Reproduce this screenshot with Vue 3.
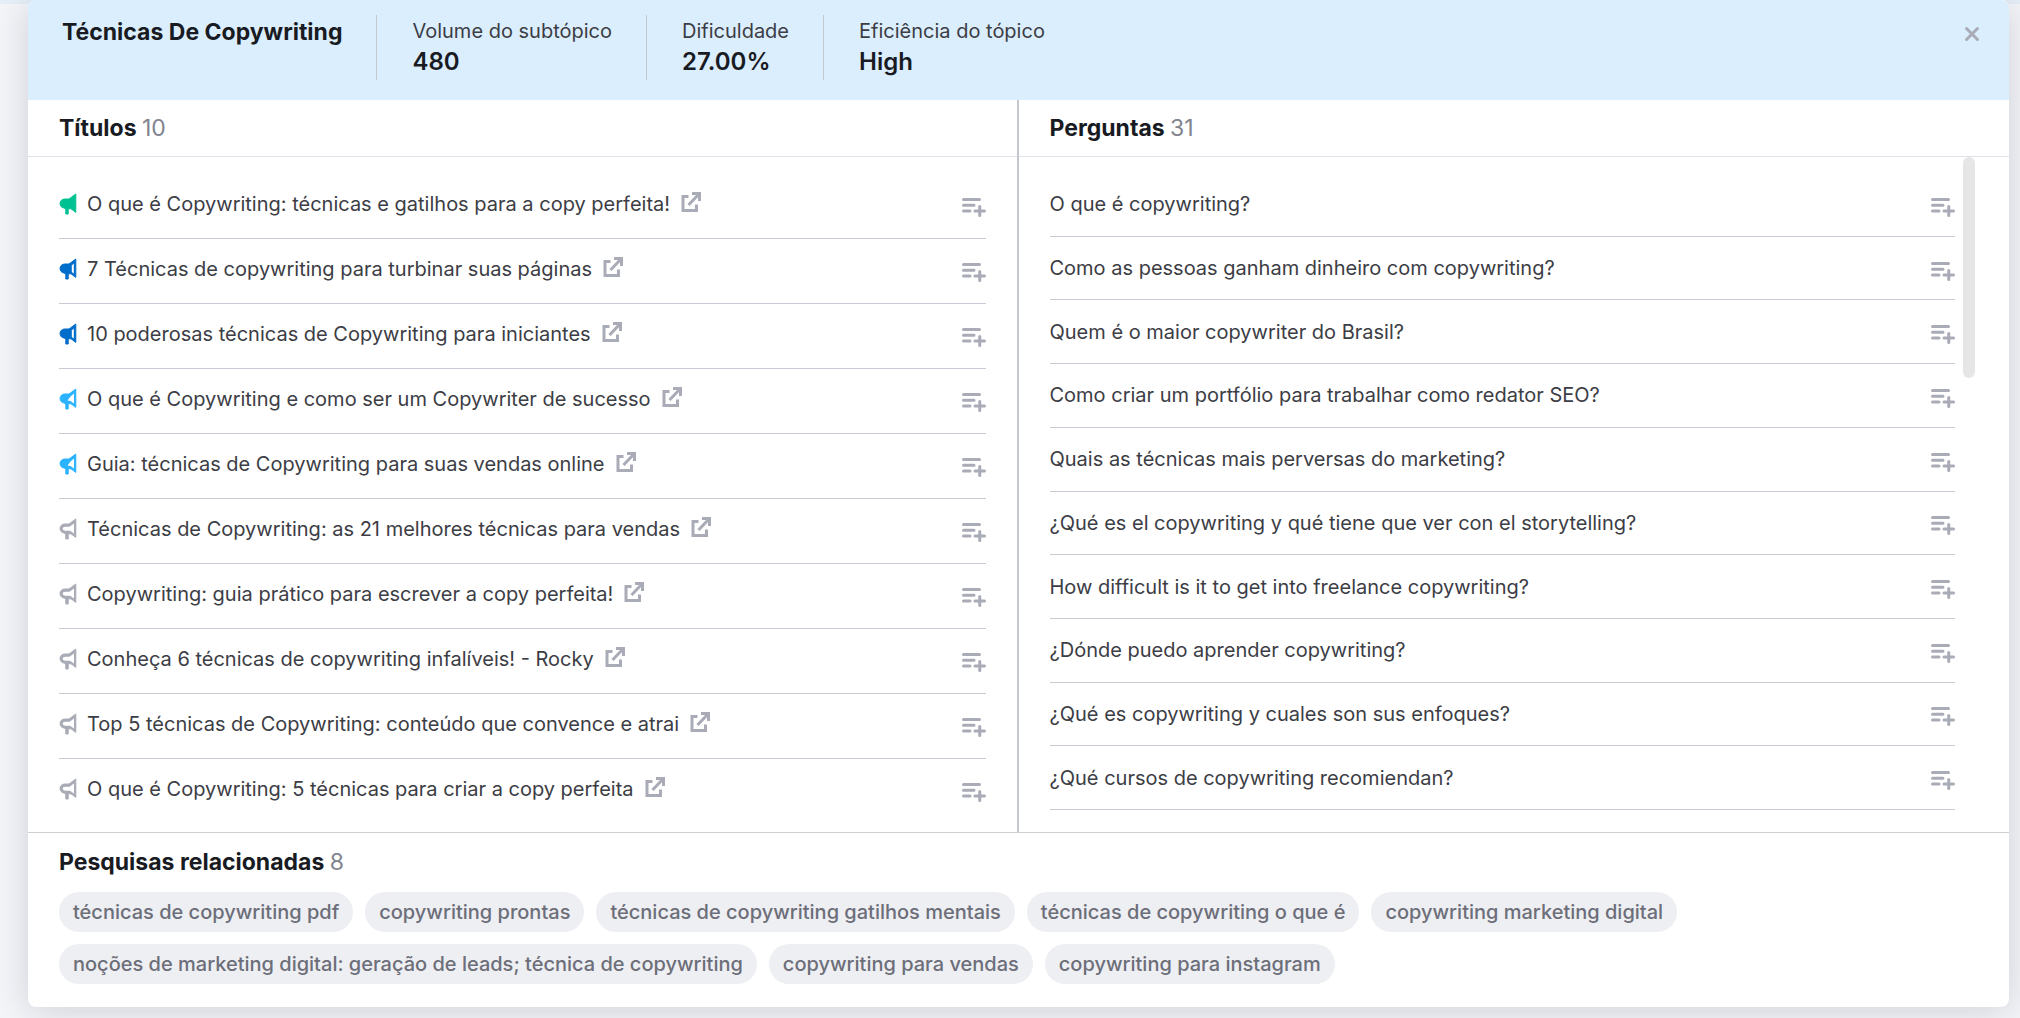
<script setup>
const stats = [
  { label: 'Volume do subtópico', value: '480' },
  { label: 'Dificuldade', value: '27.00%' },
  { label: 'Eficiência do tópico', value: 'High' },
]

const titles = [
  { text: 'O que é Copywriting: técnicas e gatilhos para a copy perfeita!', level: 'top' },
  { text: '7 Técnicas de copywriting para turbinar suas páginas', level: 'high' },
  { text: '10 poderosas técnicas de Copywriting para iniciantes', level: 'high' },
  { text: 'O que é Copywriting e como ser um Copywriter de sucesso', level: 'medium' },
  { text: 'Guia: técnicas de Copywriting para suas vendas online', level: 'medium' },
  { text: 'Técnicas de Copywriting: as 21 melhores técnicas para vendas', level: 'low' },
  { text: 'Copywriting: guia prático para escrever a copy perfeita!', level: 'low' },
  { text: 'Conheça 6 técnicas de copywriting infalíveis! - Rocky', level: 'low' },
  { text: 'Top 5 técnicas de Copywriting: conteúdo que convence e atrai', level: 'low' },
  { text: 'O que é Copywriting: 5 técnicas para criar a copy perfeita', level: 'low' },
]

const questions = [
  'O que é copywriting?',
  'Como as pessoas ganham dinheiro com copywriting?',
  'Quem é o maior copywriter do Brasil?',
  'Como criar um portfólio para trabalhar como redator SEO?',
  'Quais as técnicas mais perversas do marketing?',
  '¿Qué es el copywriting y qué tiene que ver con el storytelling?',
  'How difficult is it to get into freelance copywriting?',
  '¿Dónde puedo aprender copywriting?',
  '¿Qué es copywriting y cuales son sus enfoques?',
  '¿Qué cursos de copywriting recomiendan?',
]

const searches = [
  'técnicas de copywriting pdf',
  'copywriting prontas',
  'técnicas de copywriting gatilhos mentais',
  'técnicas de copywriting o que é',
  'copywriting marketing digital',
  'noções de marketing digital: geração de leads; técnica de copywriting',
  'copywriting para vendas',
  'copywriting para instagram',
]

// Part of the megaphone left unfilled, by resonance level
const hollow = {
  high: 'M14.8 5.5 V15.5 L12.8 14 V7.5 Z',
  medium: 'M15 5.5 V15.5 L11.5 13 L8.5 12.5 L11.5 8.5 Z',
  low: 'M15 5.5 V15.5 L11 12.8 H6.5 C2.8 12.5 2.8 8.8 6.5 8.8 H10.5 Z',
}
</script>

<template>
  <div class="page">
    <main class="panel">
      <header class="head">
        <h1>Técnicas De Copywriting</h1>
        <dl class="stats">
          <div v-for="s in stats" :key="s.label" class="stat">
            <dt>{{ s.label }}</dt>
            <dd>{{ s.value }}</dd>
          </div>
        </dl>
        <button class="close" type="button" aria-label="Fechar">
          <svg width="16" height="16" viewBox="0 0 16 16"><path d="M2.5 2.5 L13.5 13.5 M13.5 2.5 L2.5 13.5" /></svg>
        </button>
      </header>

      <div class="columns">
        <section class="column">
          <h2>Títulos <span>10</span></h2>
          <ul class="titles">
            <li v-for="t in titles" :key="t.text">
              <svg class="horn" :class="t.level" width="18" height="22" viewBox="0 0 18 22" aria-hidden="true">
                <path class="body" d="M16.8 1 V19.4 L12 15.8 H9.2 V21 H6.8 V15.8 L5 15 C-0.4 14.4 -0.4 6 6 6 H10 Z" />
                <path v-if="hollow[t.level]" class="hollow" :d="hollow[t.level]" />
              </svg>
              <a href="#">{{ t.text }}<svg class="out" width="22" height="24" viewBox="0 0 22 24" aria-hidden="true"><path d="M8.5 6.5 H3 V20.5 H16.5 V14.5 M12 3.5 H19.5 V11 M19 4 L8.5 15" /></svg></a>
              <button class="add" type="button" aria-label="Adicionar">
                <svg width="24" height="20" viewBox="0 0 24 20"><path d="M1.5 2.5 H17.5 M1.5 8.3 H12 M1.5 14 H8 M13 14 H22.5 M17.75 9.5 V18.5" /></svg>
              </button>
            </li>
          </ul>
        </section>

        <section class="column">
          <h2>Perguntas <span>31</span></h2>
          <div class="scroller">
            <ul class="questions">
              <li v-for="q in questions" :key="q">
                <p>{{ q }}</p>
                <button class="add" type="button" aria-label="Adicionar">
                  <svg width="24" height="20" viewBox="0 0 24 20"><path d="M1.5 2.5 H17.5 M1.5 8.3 H12 M1.5 14 H8 M13 14 H22.5 M17.75 9.5 V18.5" /></svg>
                </button>
              </li>
            </ul>
            <div class="thumb"></div>
          </div>
        </section>
      </div>

      <section class="related">
        <h2>Pesquisas relacionadas <span>8</span></h2>
        <div class="tags">
          <button v-for="s in searches" :key="s" type="button">{{ s }}</button>
        </div>
      </section>
    </main>
  </div>
</template>

<style>
body {
  background: #f4f5f9;
}
</style>

<style scoped>
.page {
  box-sizing: border-box;
  min-height: 100vh;
  padding: 0 11px 11px 28px;
  overflow: hidden;
  font-family: Inter, "Liberation Sans", sans-serif;
  font-size: 20px;
  line-height: 28px;
  color: #3c3d45;
  background: linear-gradient(#e6eef8 4px, #f4f5f9 4px);
}

.panel {
  border-radius: 8px;
  background: #fff;
  box-shadow: 0 4px 36px rgba(25, 27, 35, 0.16);
}

h1,
h2,
dl,
dd,
ul,
p {
  margin: 0;
  padding: 0;
}

h1,
h2 {
  font-size: 23px;
  font-weight: 700;
  color: #191b23;
}

h2 span {
  font-weight: 400;
  color: #82848f;
}

button {
  padding: 0;
  border: 0;
  background: none;
  font: inherit;
  cursor: pointer;
}

svg {
  display: block;
  fill: none;
  stroke: #a9abb6;
}

.head {
  display: flex;
  align-items: flex-start;
  box-sizing: border-box;
  height: 100px;
  padding: 15px 29px 0 34px;
  border-radius: 8px 8px 0 0;
  background: #dbeefe;
}

h1 {
  padding-top: 3px;
}

.stats {
  display: flex;
  flex: 1;
}

.stat {
  height: 65px;
  margin-left: 34px;
  padding-left: 35px;
  border-left: 1px solid #c4c7cf;
}

.stat dt {
  padding-top: 2px;
}

.stat dd {
  padding-top: 3px;
  font-size: 24px;
  font-weight: 600;
  color: #191b23;
}

.close {
  padding-top: 11px;
}

.close svg {
  stroke-width: 3;
  stroke-linecap: round;
}

.columns {
  display: grid;
  grid-template-columns: 1fr 1fr;
}

.column {
  display: flex;
  flex-direction: column;
  min-width: 0;
}

.column:first-child {
  border-right: 2px solid #c4c7cf;
}

.column h2 {
  padding: 14px 31px;
  border-bottom: 1px solid #e0e1e9;
}

ul {
  list-style: none;
}

li {
  display: flex;
  align-items: center;
  border-bottom: 1px solid #c9cad4;
}

.titles {
  padding: 17px 31px 9px;
}

.titles li {
  height: 60px;
  padding-bottom: 4px;
}

.titles li:last-child {
  border-bottom: 0;
}

.titles a {
  display: flex;
  flex: 1;
  gap: 10px;
  margin-left: 10px;
  color: inherit;
  text-decoration: none;
}

.out {
  stroke-width: 3;
}

.horn .body {
  fill: currentColor;
  stroke: currentColor;
  stroke-linejoin: round;
}

.horn .hollow {
  fill: #fff;
  stroke: none;
}

.horn.top {
  color: #00c192;
}

.horn.high {
  color: #006dca;
}

.horn.medium {
  color: #2bb3ff;
}

.horn.low {
  color: #a9abb6;
}

.add {
  padding-top: 5px;
}

.add svg {
  stroke-width: 3;
  stroke-linecap: round;
}

.scroller {
  position: relative;
  display: flex;
  flex: 1;
}

.questions {
  display: flex;
  flex: 1;
  flex-direction: column;
  padding: 16px 54px 22px 31px;
}

.questions li {
  flex: 1;
}

.questions p {
  flex: 1;
}

.thumb {
  position: absolute;
  top: 0;
  right: 34px;
  width: 12px;
  height: 221px;
  border-radius: 6px;
  background: #e6e6e6;
}

.related {
  padding: 15px 31px 23px;
  border-top: 1px solid #d0d1d6;
}

.tags {
  display: flex;
  flex-wrap: wrap;
  gap: 12px;
  margin-top: 16px;
}

.tags button {
  height: 40px;
  padding: 0 14px;
  border-radius: 20px;
  background: #eeeff3;
  font-weight: 500;
  color: #6c6e79;
}
</style>
